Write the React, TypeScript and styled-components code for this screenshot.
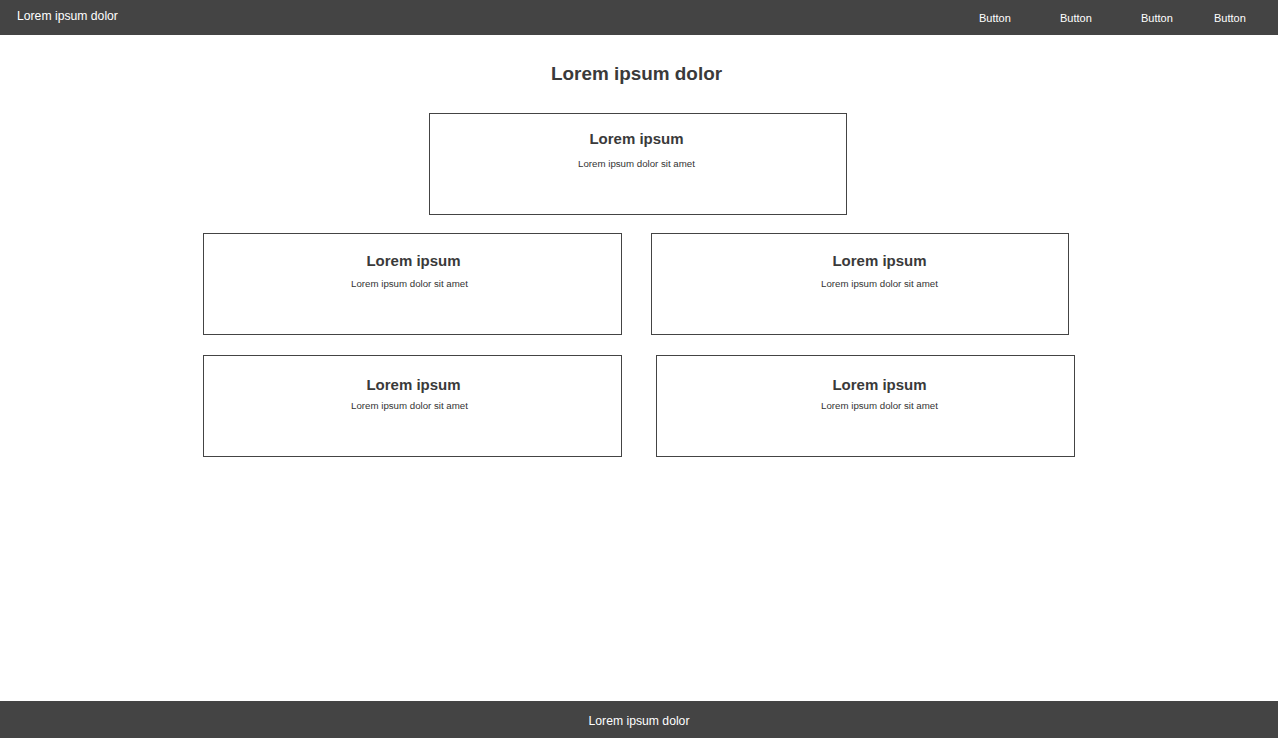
import React from "react";
import styled, { createGlobalStyle } from "styled-components";

const Global = createGlobalStyle`
  html, body { margin: 0; padding: 0; background: #fff; }
  body { font-family: "Liberation Sans", Arial, sans-serif; }
  #root { min-height: 100vh; }
`;

const Page = styled.div`
  display: flex;
  flex-direction: column;
  min-height: 738px;
`;

const Header = styled.header`
  height: 35px;
  background: #444444;
  color: #fff;
  display: flex;
  align-items: center;
  justify-content: space-between;
  padding: 0 0 0 17px;
  box-sizing: border-box;
`;

const Brand = styled.div`
  font-size: 12.2px;
  margin-top: -3px;
`;

const Nav = styled.nav`
  display: flex;
  align-items: center;
  height: 100%;
`;

const NavButton = styled.button<{ $w: number }>`
  background: none;
  border: none;
  color: #fff;
  font-family: "Liberation Sans", Arial, sans-serif;
  font-size: 11px;
  padding: 0;
  width: ${(p) => p.$w}px;
  text-align: left;
  cursor: pointer;
`;

const Main = styled.main`
  flex: 1;
  display: flex;
  flex-direction: column;
`;

const Title = styled.h1`
  margin: 0;
  padding: 28px 5px 0 0;
  text-align: center;
  font-size: 18.9px;
  font-weight: bold;
  color: #3a3a3a;
  line-height: 22px;
`;

const Row = styled.div<{ $left: number; $gap: number; $top: number }>`
  display: flex;
  padding-left: ${(p) => p.$left}px;
  gap: ${(p) => p.$gap}px;
  margin-top: ${(p) => p.$top}px;
`;

const Card = styled.section<{ $w: number; $shift: number; $titleTop: number; $textGap: number }>`
  width: ${(p) => p.$w}px;
  height: 102px;
  box-sizing: border-box;
  border: 1px solid #444;
  display: flex;
  flex-direction: column;
  align-items: center;
  padding-top: ${(p) => p.$titleTop}px;
  padding-left: ${(p) => Math.max(p.$shift, 0)}px;
  padding-right: ${(p) => Math.max(-p.$shift, 0)}px;
  gap: ${(p) => p.$textGap}px;
  color: #3a3a3a;
`;

const CardTitle = styled.h2`
  margin: 0;
  font-size: 15px;
  line-height: 18px;
  font-weight: bold;
`;

const CardText = styled.p<{ $dx: number }>`
  margin: 0 0 0 ${(p) => p.$dx}px;
  font-size: 9.7px;
  line-height: 12px;
  color: #333;
`;

const Footer = styled.footer`
  height: 37px;
  background: #444444;
  color: #fff;
  display: flex;
  align-items: center;
  justify-content: center;
  font-size: 12.2px;
`;

const FooterText = styled.span`
  margin-top: 3px;
`;

type C = { w: number; shift: number; titleTop: number; textGap: number; dx?: number };

const CardBox = ({ w, shift, titleTop, textGap, dx = 0 }: C) => (
  <Card $w={w} $shift={shift} $titleTop={titleTop} $textGap={textGap}>
    <CardTitle>Lorem ipsum</CardTitle>
    <CardText $dx={dx}>Lorem ipsum dolor sit amet</CardText>
  </Card>
);

export default function App() {
  return (
    <>
      <Global />
      <Page>
        <Header>
          <Brand>Lorem ipsum dolor</Brand>
          <Nav>
            <NavButton $w={81}>Button</NavButton>
            <NavButton $w={81}>Button</NavButton>
            <NavButton $w={73}>Button</NavButton>
            <NavButton $w={64}>Button</NavButton>
          </Nav>
        </Header>
        <Main>
          <Title>Lorem ipsum dolor</Title>
          <Row $left={429} $gap={0} $top={28}>
            <CardBox w={418} shift={-3} titleTop={16} textGap={10} />
          </Row>
          <Row $left={203} $gap={29} $top={18}>
            <CardBox w={419} shift={2} titleTop={18} textGap={8} dx={-8} />
            <CardBox w={418} shift={39} titleTop={18} textGap={8} />
          </Row>
          <Row $left={203} $gap={34} $top={20}>
            <CardBox w={419} shift={2} titleTop={20} textGap={6} dx={-8} />
            <CardBox w={419} shift={28} titleTop={20} textGap={6} />
          </Row>
        </Main>
        <Footer>
          <FooterText>Lorem ipsum dolor</FooterText>
        </Footer>
      </Page>
    </>
  );
}
